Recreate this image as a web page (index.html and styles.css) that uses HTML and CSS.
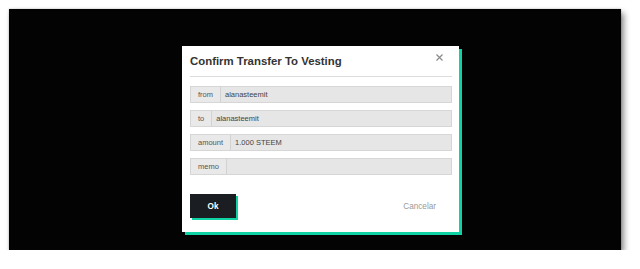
FILE: index.html
```html
<!DOCTYPE html>
<html lang="en">
<head>
  <meta charset="UTF-8" />
  <meta name="viewport" content="width=device-width, initial-scale=1.0" />
  <title>Confirm Transfer To Vesting</title>
  <link rel="stylesheet" href="styles.css">
</head>
<body>
  <div id="frame">
    <div id="modal">
      <div class="modal-header">
        <h1>Confirm Transfer To Vesting</h1>
        <button class="close-btn" aria-label="close">
          <svg width="7" height="7" viewBox="0 0 7 7">
            <path d="M0.5 0.5 L6.5 6.5 M6.5 0.5 L0.5 6.5" stroke="#8a8a8a" stroke-width="1.2" fill="none" />
          </svg>
        </button>
      </div>
      <hr class="divider" />

      <div class="fields">
        <div class="field">
          <span class="field-label">from</span>
          <span class="field-value">alanasteemit</span>
        </div>
        <div class="field">
          <span class="field-label">to</span>
          <span class="field-value">alanasteemit</span>
        </div>
        <div class="field">
          <span class="field-label">amount</span>
          <span class="field-value">1.000 STEEM</span>
        </div>
        <div class="field">
          <span class="field-label">memo</span>
          <span class="field-value"></span>
        </div>
      </div>

      <div class="actions">
        <button class="btn-ok">Ok</button>
        <button class="btn-cancel">Cancelar</button>
      </div>
    </div>
  </div>
</body>
</html>
```

FILE: styles.css
```css
body {
  margin: 0;
  background: #fff;
  font-family: 'Liberation Sans', Arial, sans-serif;
}

#frame {
  margin: 9px 0 0 9px;
  width: 612px;
  height: 241px;
  box-sizing: border-box;
  padding: 37px 0 0 173px;
  background: #030303;
  box-shadow: 0 0 2px rgba(0, 0, 0, 0.25), 3px 4px 6px rgba(0, 0, 0, 0.45);
}

#modal {
  width: 277px;
  height: 186px;
  box-sizing: border-box;
  padding: 8px 7px 14px 8px;
  background: #fff;
  box-shadow: 3px 3px 0 #10d3a5;
}

.modal-header {
  display: flex;
  justify-content: space-between;
  align-items: flex-start;
}

h1 {
  margin: 0;
  font-size: 11.4px;
  line-height: 14px;
  font-weight: bold;
  color: #333;
}

.close-btn {
  border: none;
  background: none;
  padding: 0;
  margin: 0 9px 0 0;
  line-height: 0;
}

.divider {
  margin: 8px 0 0;
  border: none;
  border-top: 1px solid #dcdcdc;
}

.fields {
  margin-top: 9px;
  display: flex;
  flex-direction: column;
  gap: 7px;
}

.field {
  display: flex;
  height: 17px;
  box-sizing: border-box;
  border: 1px solid #d6d6d6;
  background: #e6e6e6;
  font-size: 7.5px;
  line-height: 15px;
}

.field-label {
  padding: 0 7px;
  color: #555;
  background: #e9e9e9;
  border-right: 1px solid #d2d2d2;
}

.field-value {
  flex: 1;
  padding-left: 4px;
  color: #444;
}

.actions {
  margin-top: 19px;
  display: flex;
  justify-content: space-between;
  align-items: center;
}

.btn-ok {
  width: 46px;
  height: 24px;
  border: none;
  padding: 0;
  background: #1a1e22;
  color: #fff;
  font-family: inherit;
  font-size: 8.2px;
  font-weight: bold;
  box-shadow: 2px 2px 0 #10d3a5;
}

.btn-cancel {
  border: none;
  background: none;
  padding: 0 16px 0 0;
  color: #999;
  font-family: inherit;
  font-size: 8.2px;
}
```
